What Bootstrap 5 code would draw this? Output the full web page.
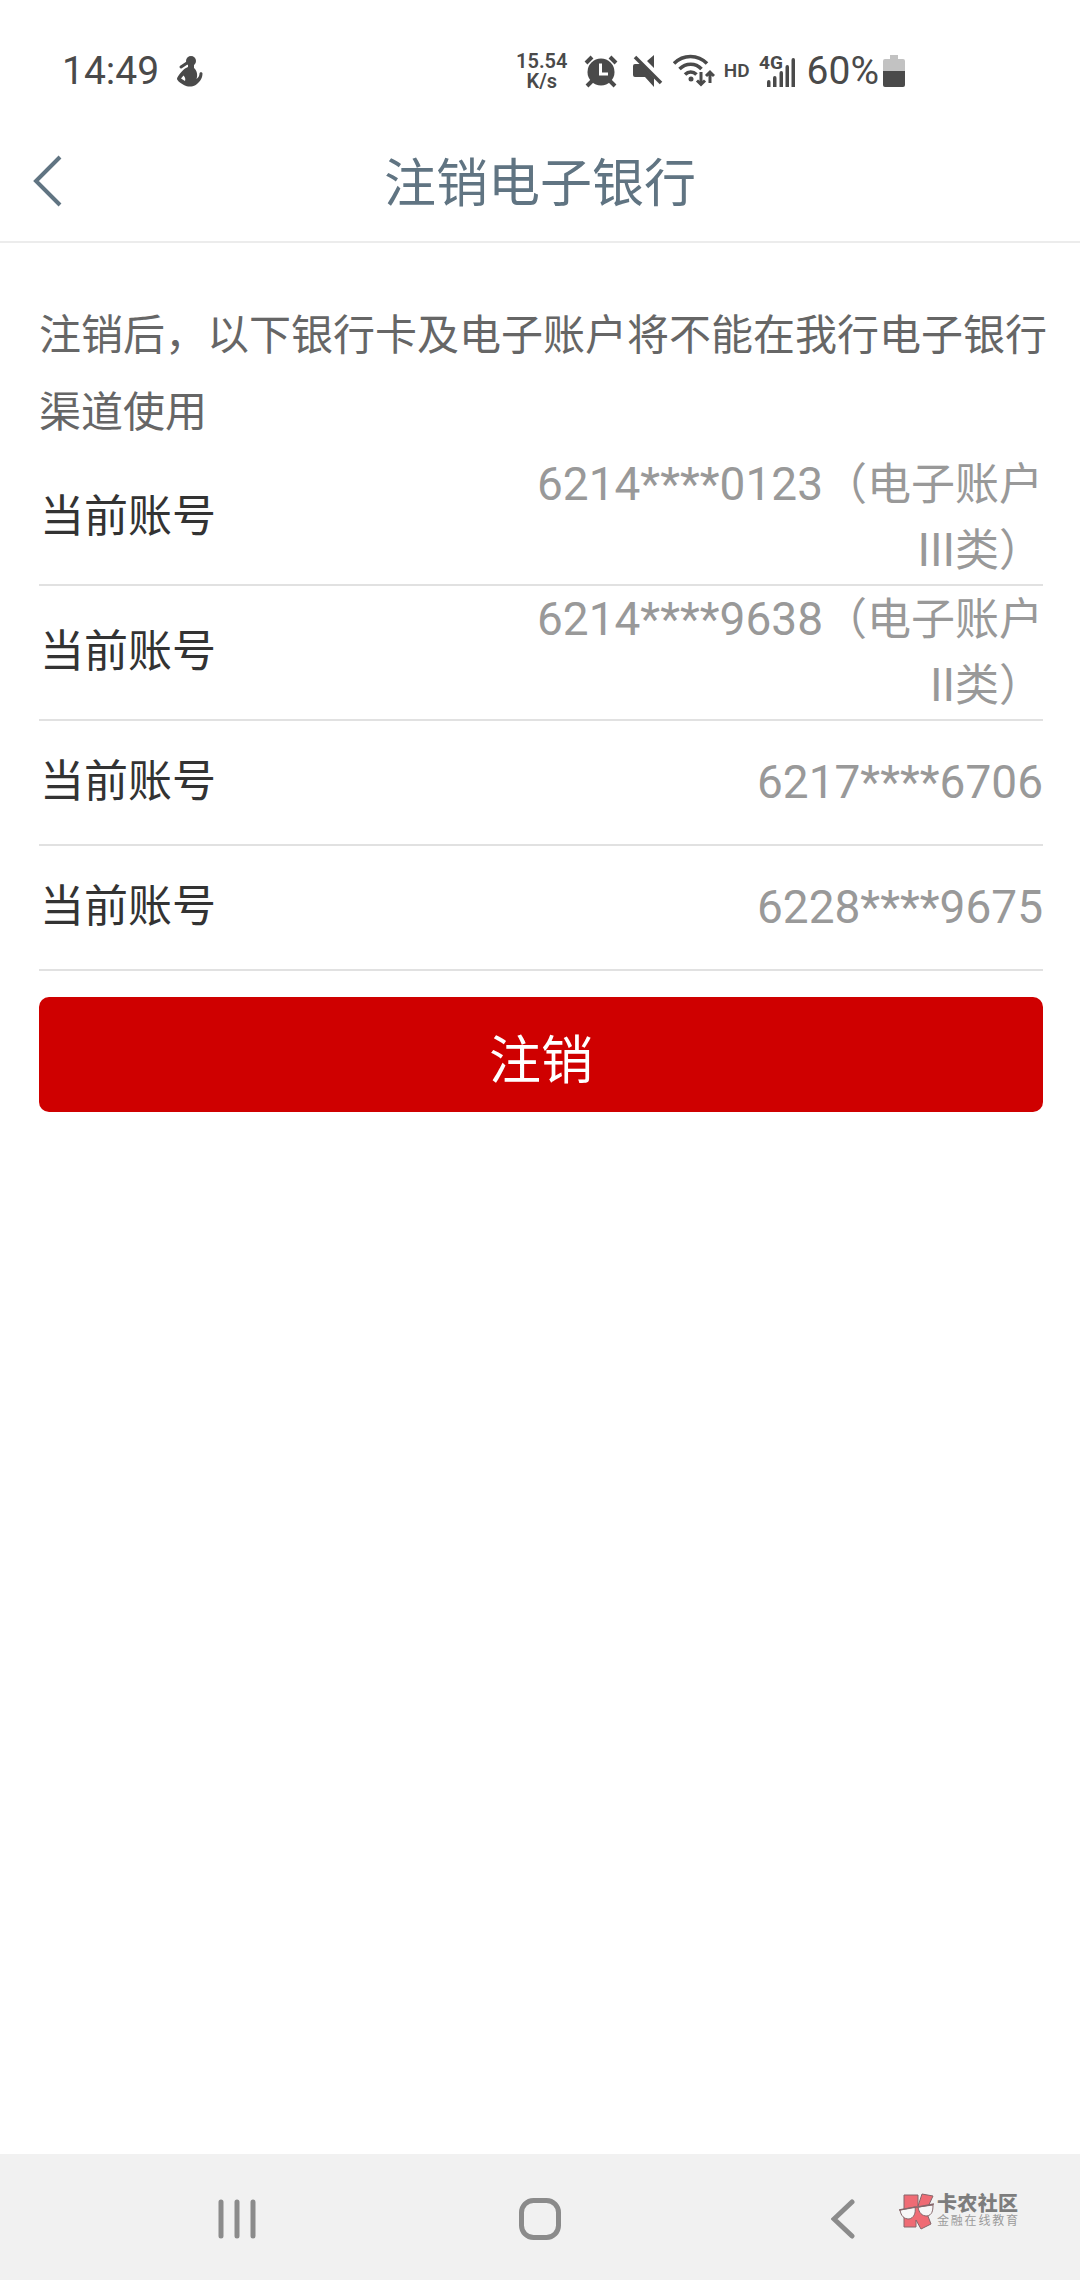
<!DOCTYPE html>
<html lang="zh-CN">
<head>
<meta charset="utf-8">
<meta name="viewport" content="width=device-width, initial-scale=1">
<title>注销电子银行</title>
<link href="https://cdn.jsdelivr.net/npm/bootstrap@5.3.0/dist/css/bootstrap.min.css" rel="stylesheet">
<style>
  body { font-family: Roboto, "Noto Sans CJK SC", sans-serif; background: #fff; color: #333; }
  .status-bar { height: 121px; padding: 0 175px 27px 62px; color: #4a4a4a; }
  .status-text { font-size: 39px; line-height: 46px; }
  .status-icons { gap: 9px; }
  .net-speed { width: 64px; font-size: 20px; line-height: 20px; font-weight: 600; }
  .hd-mark { font-size: 19px; line-height: 22px; font-weight: 600; }
  .title-bar { height: 122px; border-bottom: 2px solid #ececec; color: #607482; }
  .title-bar h1 { font-size: 52px; line-height: 60px; font-weight: 400; padding-top: 7px; }
  .back-link { left: 33px; color: inherit; }
  .page-body { padding: 54px 37px 0 39px; }
  .notice { font-size: 42px; line-height: 77px; color: #666; margin: 0 -6px 0 0; }
  .account-row { min-height: 125px; padding-bottom: 1px; border-bottom: 2px solid #e1e1e1; }
  .account-name { font-size: 44px; line-height: 60px; padding-left: 1px; font-weight: 400; }
  .account-value { max-width: 530px; font-size: 46px; line-height: 66px; color: #999; }
  .account-kind { font-size: 44px; line-height: 60px; }
  .btn-cancel { margin-top: 26px; height: 115px; padding: 14px 0 0; border-radius: 10px; border: 0; font-size: 52px; line-height: 60px;
    --bs-btn-color: #fff; --bs-btn-bg: #cf0000; --bs-btn-hover-color: #fff; --bs-btn-hover-bg: #b80000; }
  .system-nav { height: 126px; padding: 3px 86px 0; background: #f1f1f1; color: #8b8b8b; }
  .system-nav .btn { color: inherit; }
  .brand-stamp { right: 62px; bottom: 50px; gap: 3px; color: #7d7d7d; }
  .brand-words { width: 81px; text-align-last: justify; }
  .brand-name { font-size: 20px; line-height: 20px; font-weight: 900; }
  .brand-motto { font-size: 12px; line-height: 15px; color: #9b9b9b; }
</style>
<script src="https://cdn.jsdelivr.net/npm/bootstrap@5.3.0/dist/js/bootstrap.bundle.min.js"></script>
</head>
<body class="min-vh-100 d-flex flex-column">

<div class="status-bar d-flex align-items-end justify-content-between">
  <div class="d-flex align-items-center gap-3">
    <span class="status-text">14:49</span>
    <svg width="30" height="32" viewBox="0 0 30 32" fill="currentColor" aria-hidden="true">
      <circle cx="16" cy="6" r="5"/>
      <path fill-rule="evenodd" d="M13 9h6v4c3 2.500 4 7 2.500 11 2-1.500 3-3.500 3-5.500.2-1.800 3-1.500 3 .2-.2 5.300-3.200 8.800-7.200 11.500-3 1.700-8 1.700-11 0C6 28.500 2.500 26 2 24c0-2 4-7 8-10.500l3-1.500zM8.500 20.500L6 23.500l4 2.500c.8-2 0-4-1.500-5.500z"/>
      <path d="M12 8l-6 4" stroke="currentColor" stroke-width="3" stroke-linecap="round"/>
    </svg>
  </div>
  <div class="status-icons d-flex align-items-center">
    <div class="net-speed text-center">15.54<br>K/s</div>
    <svg width="40" height="34" viewBox="0 0 40 34" aria-hidden="true">
      <g stroke="currentColor" stroke-width="4" fill="none"><path d="M3 9l6-6M27 3l6 6M9 27l-5 5M27 27l5 5"/></g>
      <circle cx="18" cy="18" r="13.500" fill="currentColor"/>
      <path d="M17.500 9.500V20H25" fill="none" stroke="#fff" stroke-width="3"/>
    </svg>
    <svg width="32" height="34" viewBox="0 0 32 34" fill="currentColor" aria-hidden="true">
      <path d="M3 10h6l13 14v9l-9-10H3q-2 0-2-2V12q0-2 2-2zM22 1v13l-7-7z"/>
      <path d="M3 3l26 26" stroke="currentColor" stroke-width="3.500"/>
    </svg>
    <svg width="42" height="34" viewBox="0 0 42 34" fill="none" stroke="currentColor" stroke-width="3.500" aria-hidden="true">
      <path d="M1 9.500c9-9.500 24-9.500 33 0M6.500 15c6.500-6.500 16-6.500 22 0M12 20.500c3.500-3.500 8-3.500 11.500 0"/>
      <circle cx="18" cy="25" r="2.500" fill="currentColor" stroke="none"/>
      <path d="M28 18v12M24 26.500l4 4 4-4M37 29V18M33 22l4-4 4 4" stroke-width="3"/>
    </svg>
    <span class="hd-mark">HD</span>
    <svg width="39" height="34" viewBox="0 0 39 34" fill="currentColor" aria-hidden="true">
      <path d="M8 28q0-2 1.800-2t1.700 2v5H8zM14 24q0-2 1.800-2t1.700 2v9H14zM20.500 19q0-2 1.800-2t1.700 2v14h-3.500zM26.500 13q0-2 1.800-2t1.700 2v20h-3.500zM32.500 6q0-2 1.800-2T36 6v27h-3.500z"/>
      <text x="0" y="15" font-size="19" font-weight="700">4G</text>
    </svg>
    <div class="d-flex align-items-center gap-1">
      <span class="status-text">60%</span>
      <svg width="22" height="34" viewBox="0 0 22 34" aria-hidden="true">
        <path d="M7 1h8v4h5q2 0 2 2v10H0V7q0-2 2-2h5z" fill="#c2c2c2"/>
        <path d="M0 17h22v14q0 2-2 2H2q-2 0-2-2z" fill="currentColor"/>
      </svg>
    </div>
  </div>
</div>

<header class="title-bar position-relative d-flex align-items-center justify-content-center">
  <a class="back-link position-absolute d-flex" href="#" aria-label="返回">
    <svg width="30" height="52" viewBox="0 0 30 52" fill="none" stroke="currentColor" stroke-width="4" aria-hidden="true"><path d="M27 2L3 26l24 24"/></svg>
  </a>
  <h1 class="m-0">注销电子银行</h1>
</header>

<main class="page-body flex-grow-1">
  <p class="notice">注销后，以下银行卡及电子账户将不能在我行电子银行渠道使用</p>
  <dl class="m-0">
    <div class="account-row d-flex align-items-center justify-content-between">
      <dt class="account-name">当前账号</dt>
      <dd class="account-value m-0 text-end">6214****0123<span class="account-kind">（电子账户</span>III<span class="account-kind">类）</span></dd>
    </div>
    <div class="account-row d-flex align-items-center justify-content-between">
      <dt class="account-name">当前账号</dt>
      <dd class="account-value m-0 text-end">6214****9638<span class="account-kind">（电子账户</span>II<span class="account-kind">类）</span></dd>
    </div>
    <div class="account-row d-flex align-items-center justify-content-between">
      <dt class="account-name">当前账号</dt>
      <dd class="account-value m-0 text-end">6217****6706</dd>
    </div>
    <div class="account-row d-flex align-items-center justify-content-between">
      <dt class="account-name">当前账号</dt>
      <dd class="account-value m-0 text-end">6228****9675</dd>
    </div>
  </dl>
  <button type="button" class="btn btn-cancel w-100">注销</button>
</main>

<nav class="system-nav position-relative d-flex align-items-center" aria-label="系统导航">
  <div class="row g-0 flex-fill text-center">
    <div class="col"><button type="button" class="btn p-0 border-0" aria-label="最近任务">
      <svg class="d-block" width="38" height="42" viewBox="0 0 38 42" fill="none" stroke="currentColor" stroke-width="5" stroke-linecap="round" aria-hidden="true"><path d="M3 4v34M19 4v34M35 4v34"/></svg>
    </button></div>
    <div class="col"><button type="button" class="btn p-0 border-0" aria-label="主屏幕">
      <svg class="d-block" width="42" height="42" viewBox="0 0 42 42" fill="none" stroke="currentColor" stroke-width="5" aria-hidden="true"><rect x="2.500" y="2.500" width="37" height="37" rx="12"/></svg>
    </button></div>
    <div class="col"><button type="button" class="btn p-0 border-0" aria-label="返回上一页">
      <svg class="d-block" width="24" height="42" viewBox="0 0 24 42" fill="none" stroke="currentColor" stroke-width="5" stroke-linecap="round" aria-hidden="true"><path d="M21 4L3 21l18 17"/></svg>
    </button></div>
  </div>
  <div class="brand-stamp position-absolute d-flex align-items-center">
    <svg width="35" height="37" viewBox="0 0 35 37" stroke="#86676b" stroke-width="1" aria-hidden="true">
      <path d="M5 2h14v11l4-12 11 2-7 15 5 13-10 5-5-9v7H5z" fill="#ef6b74"/>
      <path d="M1 17l15-3c1 6-1 11-6 12-5 0-8-3-9-9zM19 14l15-2c0 6-1 10-6 11-5 0-8-3-9-9z" fill="#f7f7f7"/>
      <path d="M0 17l17-3 2 0 16-3" fill="none" stroke-width="1.500"/>
    </svg>
    <div class="brand-words">
      <div class="brand-name">卡农社区</div>
      <div class="brand-motto">金融在线教育</div>
    </div>
  </div>
</nav>

</body>
</html>
